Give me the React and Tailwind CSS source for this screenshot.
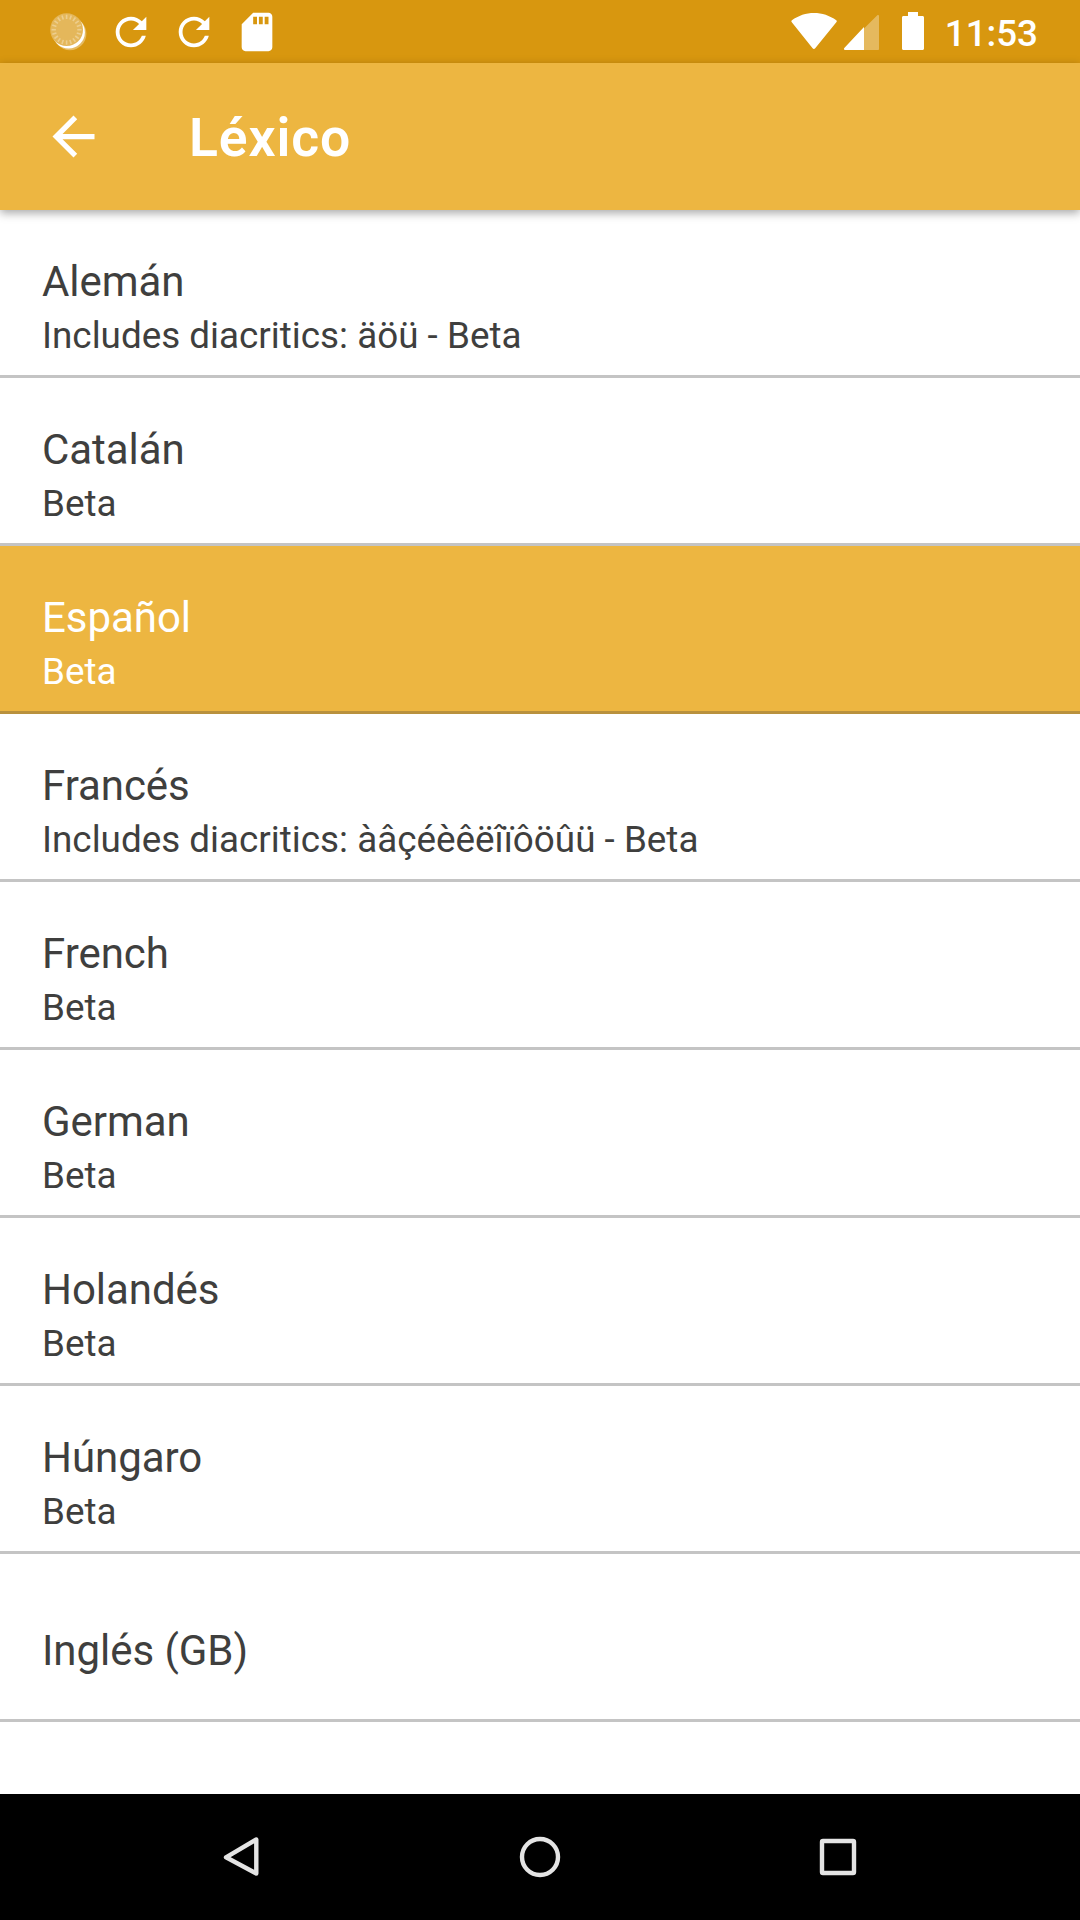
import React from "react";

const items = [
  { title: "Alemán", note: "Includes diacritics: äöü - Beta" },
  { title: "Catalán", note: "Beta" },
  { title: "Español", note: "Beta", selected: true },
  { title: "Francés", note: "Includes diacritics: àâçéèêëîïôöûü - Beta" },
  { title: "French", note: "Beta" },
  { title: "German", note: "Beta" },
  { title: "Holandés", note: "Beta" },
  { title: "Húngaro", note: "Beta" },
  { title: "Inglés (GB)" },
];

const ticks = Array.from({ length: 20 }, (_, i) => i * 18);

function Spinner() {
  return (
    <svg viewBox="0 0 46 46" className="size-[46px]">
      <circle cx="24.9" cy="24.7" r="16.5" fill="#fff" fillOpacity="0.35" />
      <circle cx="23.6" cy="23.2" r="16.3" fill="#fff" />
      <circle cx="21.6" cy="20.7" r="16.4" fill="#e4b75b" />
      {ticks.map((a) => (
        <line key={a} x1="21.6" y1="5.7" x2="21.6" y2="10" stroke="#edce8e" strokeWidth="1.6" transform={`rotate(${a} 21.6 20.7)`} />
      ))}
    </svg>
  );
}

function Refresh() {
  return (
    <svg viewBox="0 0 24 24" className="size-[46px]" fill="#fff">
      <path d="M17.65 6.35C16.2 4.9 14.21 4 12 4c-4.42 0-7.99 3.58-7.99 8s3.57 8 7.99 8c3.73 0 6.84-2.55 7.73-6h-2.08c-.82 2.33-3.04 4-5.65 4-3.31 0-6-2.69-6-6s2.69-6 6-6c1.66 0 3.14.69 4.22 1.78L13 11h7V4l-2.35 2.35z" />
    </svg>
  );
}

function SdCard() {
  return (
    <svg viewBox="0 0 24 24" className="size-[46px]" fill="#fff">
      <path d="M18 2h-8L4.02 8 4 20c0 1.1.9 2 2 2h12c1.1 0 2-.9 2-2V4c0-1.1-.9-2-2-2zm-6 6h-2V4h2v4zm3 0h-2V4h2v4zm3 0h-2V4h2v4z" />
    </svg>
  );
}

function StatusBar() {
  return (
    <div className="flex h-[63px] items-center justify-between bg-[#d8970f] pl-[45px] pr-[42px]">
      <div className="flex gap-[17px]">
        <Spinner />
        <Refresh />
        <Refresh />
        <SdCard />
      </div>
      <div className="flex items-center">
        <svg viewBox="0 0 140 63" className="h-[63px] w-[140px]" fill="#fff">
          <path d="M1.9 20.3C8.4 15.5 16 13 24 13s15.8 2.5 22.3 7.3c.6.5.7 1.2.2 1.8L25.2 48.3c-.7.9-1.900.9-2.600 0L1.600 22.100c-.4-.6-.3-1.300.3-1.800z" />
          <path d="M87.3 15.3c.6-.6 1.7-.2 1.7.7V49c0 .6-.4 1-1 1H74V28.6z" fillOpacity="0.33" />
          <path d="M74 27v23H55c-1 0-1.5-1.2-.7-2z" />
          <path d="M118 12h10v4h4.5c.9 0 1.5.6 1.5 1.5v31c0 .9-.6 1.5-1.5 1.5h-19c-.9 0-1.5-.6-1.5-1.5v-31c0-.9.6-1.5 1.5-1.5h4.5z" />
        </svg>
        <span className="pl-[15px] pt-[4px] text-[36.75px] font-medium leading-[44px] text-white">11:53</span>
      </div>
    </div>
  );
}

function AppBar() {
  return (
    <header className="relative flex h-[147px] items-center bg-[#edb641] pl-[42px] shadow-[0_3px_9px_rgba(0,0,0,0.35)]">
      <svg viewBox="0 0 24 24" className="size-[63px]" fill="#fff">
        <path d="M20 11H7.83l5.59-5.59L12 4l-8 8 8 8 1.41-1.41L7.83 13H20v-2z" />
      </svg>
      <h1 className="pl-[84px] pt-[3px] text-[53.5px] font-semibold leading-[62px] tracking-[0.9px] text-white">Léxico</h1>
    </header>
  );
}

function Row({ title, note, selected }) {
  const tone = selected
    ? "bg-[#edb641] text-white border-[#b9913d]"
    : "bg-white text-[#3f3f3e] border-[#c4c4c4]";
  return (
    <li className={`flex h-[168px] flex-col border-b-[3px] px-[42px] ${note ? "pt-[47px]" : "pt-[72px]"} ${tone}`}>
      <span className="text-[42px] leading-[50px] tracking-[-0.05px]">{title}</span>
      {note && <span className="mt-[7px] text-[36.85px] leading-[44px]">{note}</span>}
    </li>
  );
}

function NavBar() {
  return (
    <nav className="flex h-[126px] items-center justify-center bg-black">
      <svg viewBox="0 0 660 60" className="h-[60px] w-[660px]" fill="none" stroke="#e4e4e4" strokeWidth="4.4" strokeLinejoin="round">
        <path d="M46.3 12.5V46.500L16 30.300Z" />
        <circle cx="330" cy="30" r="18" />
        <rect x="612" y="14" width="32" height="32" rx="1" />
      </svg>
    </nav>
  );
}

export default function App() {
  return (
    <div className="flex h-[1920px] w-[1080px] flex-col overflow-hidden bg-white font-['Roboto',sans-serif]">
      <StatusBar />
      <AppBar />
      <ul className="flex-1">
        {items.map((item) => (
          <Row key={item.title} {...item} />
        ))}
      </ul>
      <NavBar />
    </div>
  );
}
